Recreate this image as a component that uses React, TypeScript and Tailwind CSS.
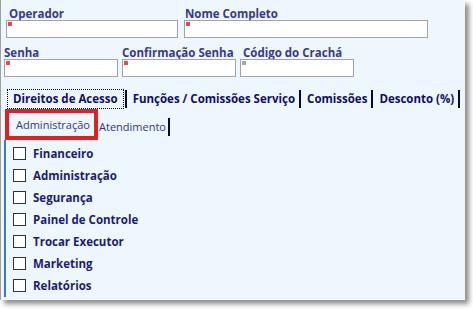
import React from 'react';

const font = { fontFamily: '"Open Sans", "Liberation Sans", sans-serif' };

interface FieldProps {
    label: string;
    width: string;
    labelPad?: string;
    marker?: 'red' | 'gray';
}

function Field({ label, width, labelPad = '', marker = 'red' }: FieldProps) {
    return (
        <div className={`flex flex-col ${width}`}>
            <span className={`h-[13px] leading-[13px] text-[11.5px] font-bold text-[#38388f] whitespace-nowrap ${labelPad}`}>
                {label}
            </span>
            <div className="relative h-[18px] bg-white border border-[#a3a3a3]">
                <span
                    className={`absolute left-[1px] top-[1px] w-[4px] h-[4px] ${
                        marker === 'red' ? 'bg-[#ff4040]' : 'bg-[#a8a8a8]'
                    }`}
                />
            </div>
        </div>
    );
}

const tabs = ['Funções / Comissões Serviço', 'Comissões', 'Desconto (%)'];

const perms = [
    'Financeiro',
    'Administração',
    'Segurança',
    'Painel de Controle',
    'Trocar Executor',
    'Marketing',
    'Relatórios',
];

export default function App() {
    return (
        <div className="w-[473px] h-[309px] bg-white" style={font}>
            <div className="flex flex-col w-[465px] h-[300px] bg-[#eef6fe] border-l border-[#a0a0a0] shadow-[4px_4px_5px_rgba(0,0,0,0.45)]">
                {/* linha 1 */}
                <div className="flex pt-[7px]">
                    <Field label="Operador" width="w-[172px] ml-[5px]" labelPad="pl-[3px]" />
                    <Field label="Nome Completo" width="w-[244px] ml-[6px]" labelPad="pl-[1px]" />
                </div>

                {/* linha 2 */}
                <div className="flex pt-[8px]">
                    <Field label="Senha" width="w-[114px] ml-[3px]" />
                    <Field label="Confirmação Senha" width="w-[114px] ml-[4px]" />
                    <Field label="Código do Crachá" width="w-[114px] ml-[4px]" labelPad="pl-[3px]" marker="gray" />
                </div>

                {/* abas */}
                <div className="flex items-center mt-[12px] ml-[6px] h-[20px] text-[11.5px] font-bold text-[#0e0e6c] whitespace-nowrap">
                    <span className="shrink-0 h-[20px] leading-[18px] px-[5px] border border-dotted border-black">
                        Direitos de Acesso
                    </span>
                    <span className="shrink-0 w-[2px] h-[18px] ml-[1px] bg-[#0a0a30]" />
                    {tabs.map((t) => (
                        <React.Fragment key={t}>
                            <span className="shrink-0 leading-[18px] pl-[6px] pr-[4px]">{t}</span>
                            <span className="shrink-0 w-[2px] h-[18px] bg-[#0a0a30]" />
                        </React.Fragment>
                    ))}
                </div>

                {/* sub-abas */}
                <div className="flex items-end ml-[4px] h-[31px] text-[11px] text-[#35358a]">
                    <span className="h-[31px] w-[93px] border-4 border-[#e31e24] pl-[7px] leading-[23px]">
                        Administração
                    </span>
                    <span className="leading-[18px] pl-[1px] pr-[2px] mb-[4px]">Atendimento</span>
                    <span className="w-[2px] h-[18px] mb-[4px] bg-[#0a0a30]" />
                </div>

                {/* permissões */}
                <div className="flex flex-col ml-[3px] mb-[3px] flex-1 border-l-2 border-[#3a78c8] pt-[7px] pl-[7px] gap-[9px]">
                    {perms.map((p) => (
                        <label key={p} className="flex items-center gap-[7px] h-[13px]">
                            <span className="w-[13px] h-[13px] bg-white border border-[#333]" />
                            <span className="text-[11.5px] font-bold text-[#1c1c74] leading-[13px]">{p}</span>
                        </label>
                    ))}
                </div>
            </div>
        </div>
    );
}
